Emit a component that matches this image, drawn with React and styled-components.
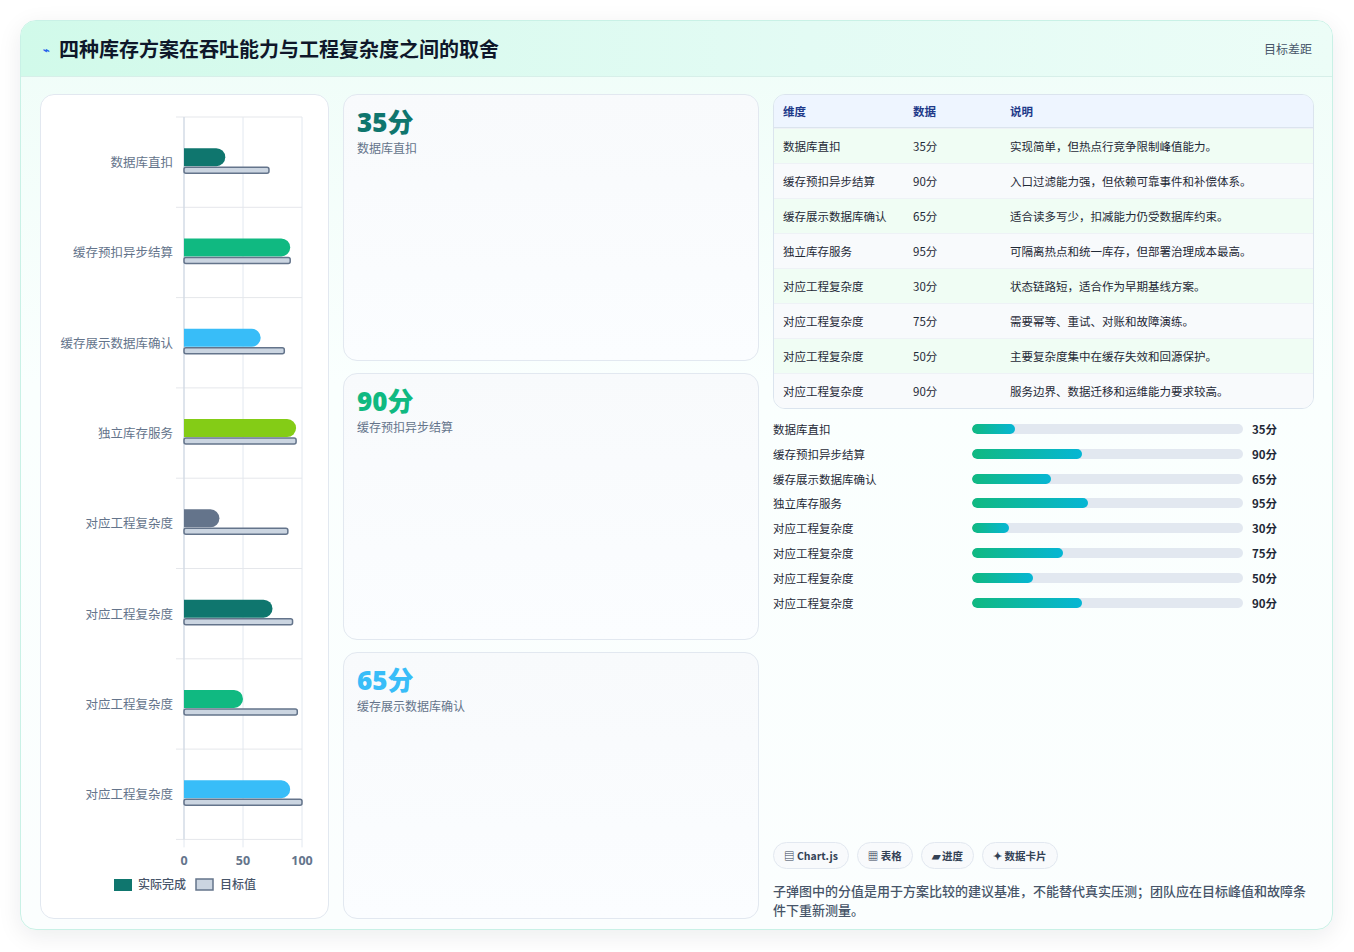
import React from "react";
import styled, { createGlobalStyle } from "styled-components";

const G = createGlobalStyle`
  body{margin:0;background:#fff;font-family:"Noto Sans CJK SC","Noto Sans",sans-serif;}
`;
const Page = styled.div`padding:20px 20px 20px 20px;`;
const Card = styled.div`
  width:1313px;height:910px;box-sizing:border-box;border:1px solid #c9f1e6;border-radius:16px;
  background:linear-gradient(180deg,#effdf8 0%,#fafffe 40%,#fbfefe 100%);
  box-shadow:0 6px 24px rgba(15,23,42,.08);overflow:hidden;display:flex;flex-direction:column;
`;
const Header = styled.div`
  height:56px;flex:none;box-sizing:border-box;display:flex;align-items:center;justify-content:space-between;
  padding:0 20px 0 22px;background:linear-gradient(90deg,#d1faea,#e3fbf4 60%,#ecfdf7);border-bottom:1px solid #d7efe9;
`;
const Title = styled.h1`margin:0;font-size:20px;font-weight:700;color:#0f172a;display:flex;align-items:center;gap:9px;`;
const Icon = styled.span`color:#2563eb;font-size:11px;`;
const Meta = styled.span`font-size:12px;color:#475569;`;
const Body = styled.div`flex:1;display:grid;grid-template-columns:289px 416px 1fr;gap:14px;padding:17px 18px 17px 19px;`;
const Panel = styled.div`background:#fff;border:1px solid #e2e8f0;border-radius:14px;`;
const Cards = styled.div`display:grid;grid-template-rows:repeat(3,1fr);gap:12px;`;
const KCard = styled.div`border:1px solid #e2e8f0;border-radius:14px;padding:10px 13px;background:linear-gradient(180deg,#f8fafc,#fbfdff);`;
const Big = styled.div`font-family:"Open Sans","Noto Sans CJK SC",sans-serif;font-size:26px;font-weight:800;color:${p=>p.c};line-height:34px;`;
const Sub = styled.div`font-size:12px;color:#64748b;`;
const Right = styled.div`display:flex;flex-direction:column;`;
const Table = styled.table`border-collapse:separate;border-spacing:0;width:100%;border:1px solid #dbe4ee;border-radius:12px;overflow:hidden;font-size:11.5px;`;
const Th = styled.th`text-align:left;font-weight:700;color:#1e3a8a;background:#eef5ff;height:32px;padding:0 9px;border-bottom:1px solid #dbe4ee;`;
const Td = styled.td`height:34px;padding:0 9px;color:#1f2937;border-top:1px solid #eef2f6;background:${p=>p.odd?"#f8fafc":"#f0fdf4"};`;
const Bars = styled.div`margin-top:11px;display:flex;flex-direction:column;gap:6.8px;`;
const BRow = styled.div`display:grid;grid-template-columns:199px 271px 1fr;align-items:center;height:18px;font-size:11.5px;color:#1f2937;`;
const Track = styled.div`height:10px;border-radius:5px;background:#e2e8f0;overflow:hidden;`;
const Fill = styled.div`height:100%;border-radius:5px;background:linear-gradient(90deg,#10b981,#06b6d4);`;
const Val = styled.span`font-weight:700;padding-left:9px;`;
const Chips = styled.div`margin-top:auto;display:flex;gap:8px;`;
const Chip = styled.span`font-size:10.5px;font-weight:700;color:#334155;border:1px solid #e2e8f0;background:#f8fafc;border-radius:14px;padding:5px 10px;`;
const Note = styled.p`margin:12px 0 0;font-size:13px;line-height:19px;color:#475569;font-weight:500;`;

const names=["数据库直扣","缓存预扣异步结算","缓存展示数据库确认","独立库存服务","对应工程复杂度","对应工程复杂度","对应工程复杂度","对应工程复杂度"];
const vals=[35,90,65,95,30,75,50,90];
const tg=[72,90,85,95,88,92,96,100];
const cols=["#0f766e","#10b981","#38bdf8","#84cc16","#64748b","#0f766e","#10b981","#38bdf8"];
const notes=["实现简单，但热点行竞争限制峰值能力。","入口过滤能力强，但依赖可靠事件和补偿体系。","适合读多写少，扣减能力仍受数据库约束。","可隔离热点和统一库存，但部署治理成本最高。","状态链路短，适合作为早期基线方案。","需要幂等、重试、对账和故障演练。","主要复杂度集中在缓存失效和回源保护。","服务边界、数据迁移和运维能力要求较高。"];

function Chart(){
  const x0=143,w=118,y0=22,rh=90.3;
  return (
    <svg width="288" height="818" viewBox="0 0 288 818">
      {[0,50,100].map(v=><line key={v} x1={x0+v*w/100} x2={x0+v*w/100} y1={y0} y2={y0+rh*8+8} stroke="#e2e8f0"/>)}
      {Array.from({length:9}).map((_,i)=><line key={i} x1={x0-8} x2={x0+w} y1={y0+i*rh} y2={y0+i*rh} stroke="#e5e7eb"/>)}
      <line x1={x0} x2={x0} y1={y0} y2={y0+rh*8} stroke="#cbd5e1"/>
      {names.map((n,i)=>{const cy=y0+i*rh+rh/2;return (
        <g key={i}>
          <text x={x0-11} y={cy+5} textAnchor="end" fontSize="12.5" fill="#64748b" fontFamily="Noto Sans CJK SC">{n}</text>
          <path d={`M${x0} ${cy-14}H${x0+vals[i]*w/100-9}a9 9 0 0 1 0 18H${x0}Z`} fill={cols[i]}/>
          <rect x={x0} y={cy+5} width={tg[i]*w/100} height={6} rx="2" fill="#cbd5e1" stroke="#64748b" strokeWidth="1.5"/>
        </g>)})}
      {[0,50,100].map(v=><text key={v} x={x0+v*w/100} y={y0+rh*8+26} textAnchor="middle" fontSize="12.5" fontWeight="700" fill="#64748b" fontFamily="Open Sans">{v}</text>)}
      <rect x="73" y="784" width="18" height="12" fill="#0f766e"/>
      <text x="97" y="794" fontSize="12" fill="#475569" fontWeight="500" fontFamily="Noto Sans CJK SC">实际完成</text>
      <rect x="155" y="784" width="17" height="11" fill="#cbd5e1" stroke="#64748b" strokeWidth="1.5"/>
      <text x="179" y="794" fontSize="12" fill="#475569" fontWeight="500" fontFamily="Noto Sans CJK SC">目标值</text>
    </svg>
  );
}

export default function App(){
  const cardc=["#0f766e","#10b981","#38bdf8"];
  return (<Page><G/>
    <Card>
      <Header><Title><Icon>⌁</Icon>四种库存方案在吞吐能力与工程复杂度之间的取舍</Title><Meta>目标差距</Meta></Header>
      <Body>
        <Panel><Chart/></Panel>
        <Cards>{[0,1,2].map(i=><KCard key={i}><Big c={cardc[i]}>{vals[i]}分</Big><Sub>{names[i]}</Sub></KCard>)}</Cards>
        <Right>
          <Table><thead><tr><Th style={{width:112}}>维度</Th><Th style={{width:79}}>数据</Th><Th>说明</Th></tr></thead>
            <tbody>{names.map((n,i)=><tr key={i}><Td odd={i%2}>{n}</Td><Td odd={i%2}>{vals[i]}分</Td><Td odd={i%2}>{notes[i]}</Td></tr>)}</tbody>
          </Table>
          <Bars>{names.map((n,i)=><BRow key={i}><span>{n}</span><Track><Fill style={{width:`${vals[i]*0.45}%`}}/></Track><Val>{vals[i]}分</Val></BRow>)}</Bars>
          <Chips><Chip>▤ Chart.js</Chip><Chip>▦ 表格</Chip><Chip>▰ 进度</Chip><Chip>✦ 数据卡片</Chip></Chips>
          <Note>子弹图中的分值是用于方案比较的建议基准，不能替代真实压测；团队应在目标峰值和故障条件下重新测量。</Note>
        </Right>
      </Body>
    </Card>
  </Page>);
}
